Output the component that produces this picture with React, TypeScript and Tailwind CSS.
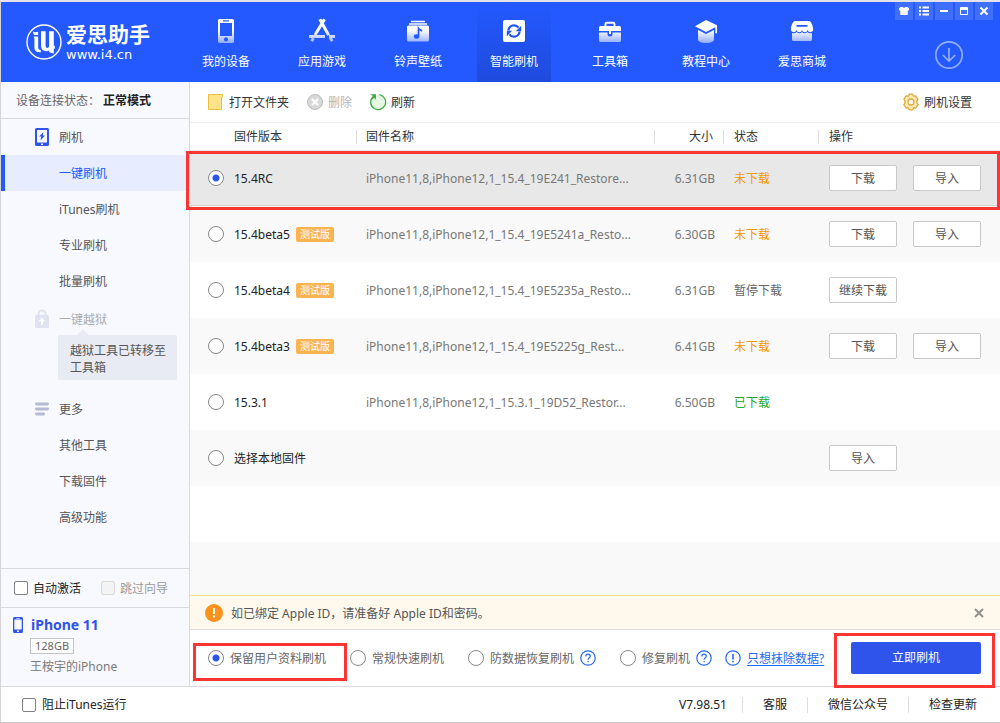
import React, { useState } from "react";

type Firmware = {
  id: string;
  version: string;
  beta?: boolean;
  file?: string;
  size?: string;
  status?: string;
  statusClass?: string;
  actions: string[];
};

const firmwares: Firmware[] = [
  { id: "rc", version: "15.4RC", file: "iPhone11,8,iPhone12,1_15.4_19E241_Restore...", size: "6.31GB", status: "未下载", statusClass: "text-[#f39800]", actions: ["下载", "导入"] },
  { id: "b5", version: "15.4beta5", beta: true, file: "iPhone11,8,iPhone12,1_15.4_19E5241a_Resto...", size: "6.30GB", status: "未下载", statusClass: "text-[#f39800]", actions: ["下载", "导入"] },
  { id: "b4", version: "15.4beta4", beta: true, file: "iPhone11,8,iPhone12,1_15.4_19E5235a_Resto...", size: "6.31GB", status: "暂停下载", statusClass: "text-[#666]", actions: ["继续下载"] },
  { id: "b3", version: "15.4beta3", beta: true, file: "iPhone11,8,iPhone12,1_15.4_19E5225g_Rest...", size: "6.41GB", status: "未下载", statusClass: "text-[#f39800]", actions: ["下载", "导入"] },
  { id: "1531", version: "15.3.1", file: "iPhone11,8,iPhone12,1_15.3.1_19D52_Restor...", size: "6.50GB", status: "已下载", statusClass: "text-[#1fa81f]", actions: [] },
  { id: "local", version: "选择本地固件", actions: ["导入"] },
];

const radioClass =
  "size-4 shrink-0 appearance-none rounded-full border border-[#888] bg-white checked:bg-[radial-gradient(circle,#2f54eb_3px,#ffffff_4px)]";
const checkClass =
  "size-3.5 shrink-0 appearance-none rounded-xs border border-[#808080] bg-white checked:bg-[#2f54eb] disabled:border-[#d9d9d9] disabled:bg-[#f3f3f5]";

function Logo() {
  return (
    <svg width="36" height="36" viewBox="0 0 36 36" fill="none" aria-hidden="true">
      <circle cx="18" cy="18" r="17" stroke="#fff" strokeWidth="1.4" />
      <path d="M7 7.6c1.5.8 3 .7 5.1.2v3.3H8.2C7.6 10.200 7 9 7 7.600Z" fill="#fff" />
      <path d="M7.400 12.400h4.800v10.800c0 1.800.8 2.600 2.600 3v2.200c-4.300 0-6.400-1.600-6.400-5.200V14.600c0-.9-.3-1.600-1-2.200Z" fill="#fff" />
      <path d="M15 7.200h4.600v14.400c0 1.500.6 2.300 1.800 2.300 1.100 0 1.700-.7 1.700-2.100V7.200h4.700v14.600h1v3h-1v4.800l-4.700-1.400v-1.700c-.9.500-1.900.7-3 .7-3.300 0-5.100-1.900-5.100-5.200V7.200Z" fill="#fff" />
    </svg>
  );
}

function NavIcon({ name }: { name: string }) {
  const fill = `url(#g-${name})`;
  return (
    <svg width="26" height="26" viewBox="0 0 26 26" fill="none" aria-hidden="true">
      <defs>
        <linearGradient id={`g-${name}`} x1="0" y1="4" x2="0" y2="25" gradientUnits="userSpaceOnUse">
          <stop offset="0.4" stopColor="#fff" />
          <stop offset="1" stopColor="#fff" stopOpacity="0.5" />
        </linearGradient>
      </defs>
      {name === "device" && (
        <path fillRule="evenodd" fill={fill} d="M6.500 1h13A1.500 1.500 0 0 1 21 2.500v21a1.500 1.500 0 0 1-1.500 1.500h-13A1.500 1.500 0 0 1 5 23.500v-21A1.500 1.500 0 0 1 6.500 1ZM7 5v13h12V5ZM10 2.300v1.200h6V2.300ZM13 19.300a2.100 2.100 0 1 0 0 4.200 2.100 2.100 0 0 0 0-4.200Z" />
      )}
      {name === "apps" && (
        <g stroke={fill} strokeWidth="3" strokeLinecap="butt">
          <path d="M10.800 1.200 19.700 17.300M15.500 1.200 6 17" />
          <path d="M0 18.500h16M20 18.500h6" />
          <path d="m4.300 20.300-1.600 2.900M21.200 19.800l2 3.500" />
        </g>
      )}
      {name === "media" && (
        <>
          <path d="M6 3.500h14M4 6h18" stroke="#fff" strokeWidth="1.300" />
          <rect x="2" y="7.500" width="22" height="16" rx="1.500" fill={fill} />
          <path d="M13.500 18.500V10.500c.8 1.300 2.500 1 3.300 2.800" stroke="#2359ff" strokeWidth="1.700" />
          <ellipse cx="11.600" cy="18.500" rx="2.700" ry="2.200" fill="#2359ff" />
        </>
      )}
      {name === "flash" && (
        <>
          <rect x="2" y="2" width="22" height="22" rx="2" fill="#fff" />
          <path d="M7.500 12.500A5.500 5.500 0 0 1 17.500 9.700M18.500 13.500A5.500 5.500 0 0 1 8.500 16.300" stroke="#2255f0" strokeWidth="2.200" />
          <path d="M20.200 7.800v5.400h-5.400ZM5.800 18.200v-5.400h5.400Z" fill="#2255f0" />
        </>
      )}
      {name === "tools" && (
        <>
          <path d="M8.500 8V6a1.300 1.300 0 0 1 1.300-1.300h6.400A1.300 1.300 0 0 1 17.500 6v2" stroke="#fff" strokeWidth="2" />
          <path d="M3.500 8h19A1.500 1.500 0 0 1 24 9.500V13H2V9.500A1.500 1.500 0 0 1 3.500 8Z" fill="#fff" />
          <path d="M2 14.500h8.500V16a2.500 2.500 0 0 0 5 0v-1.500H24v8a1.500 1.500 0 0 1-1.500 1.500h-19A1.500 1.500 0 0 1 2 22.500Z" fill={fill} />
          <path d="M12 13h2v3h-2Z" fill="#fff" />
        </>
      )}
      {name === "course" && (
        <>
          <path d="M13 2 24 7.200v8h-1.700V9.300L13 14 2 8.200Z" fill="#fff" />
          <path d="m5 12 8 4 8-4v9.500c0 2-3.500 3.500-8 3.500s-8-1.500-8-3.500Z" fill={fill} />
        </>
      )}
      {name === "store" && (
        <>
          <path fillRule="evenodd" fill="#fff" d="M6 3h14c2 0 4 5 4 7.500a2.800 2.800 0 0 1-5.500 1.500 2.800 2.800 0 0 1-5.500 0 2.800 2.800 0 0 1-5.500 0A2.800 2.800 0 0 1 2 10.500C2 8 4 3 6 3Zm1.500 4v1.700h11V7Z" />
          <path d="M3 15c1.800.7 3.500.2 4.700-1 1.500 1.600 3.800 1.600 5.300 0 1.500 1.600 3.800 1.600 5.300 0 1.200 1.200 2.900 1.700 4.700 1v6.500a1.500 1.500 0 0 1-1.500 1.500h-17A1.500 1.500 0 0 1 3 21.500Z" fill={fill} />
        </>
      )}
    </svg>
  );
}

const tabs = [
  ["device", "我的设备"],
  ["apps", "应用游戏"],
  ["media", "铃声壁纸"],
  ["flash", "智能刷机"],
  ["tools", "工具箱"],
  ["course", "教程中心"],
  ["store", "爱思商城"],
];

const windowButtons: [string, React.ReactNode][] = [
  ["皮肤", <path key="p" d="M2.500 2h2L6 3l1.500-1h2L11 3.200v2.300H9.700V10H2.300V5.500H1V3.200Z" fill="#fff" />],
  ["菜单", <path key="p" d="M1 2.500h2M4.500 2.500H11M1 6h2M4.500 6H11M1 9.500h2M4.500 9.500H11" stroke="#fff" strokeWidth="2" />],
  ["最小化", <path key="p" d="M2 6h8" stroke="#fff" strokeWidth="2" />],
  ["最大化", <path key="p" fillRule="evenodd" d="M3 2h6a1 1 0 0 1 1 1v6a1 1 0 0 1-1 1H3a1 1 0 0 1-1-1V3a1 1 0 0 1 1-1Zm0 3v4h6V5Z" fill="#fff" />],
  ["关闭", <path key="p" d="m2.500 2.500 7 7m0-7-7 7" stroke="#fff" strokeWidth="2" />],
];

function Header() {
  return (
    <header className="flex h-20 shrink-0 bg-[#2359ff] text-white">
      <div className="flex w-[188px] shrink-0 items-center gap-1 pl-[25px]">
        <Logo />
        <div className="flex flex-col">
          <span className="text-[21px] leading-[26px] font-bold">爱思助手</span>
          <span className="font-['DejaVu_Sans',sans-serif] text-[13px] leading-4">www.i4.cn</span>
        </div>
      </div>
      <nav className="flex gap-[22px]">
        {tabs.map(([icon, label]) => (
          <a
            key={icon}
            href={`#${icon}`}
            className={
              icon === "flash"
                ? "flex w-[74px] flex-col items-center gap-[9px] bg-linear-to-b from-[#2359ff] to-[#1f4bdc] pt-4"
                : "flex w-[74px] flex-col items-center gap-[9px] pt-4"
            }
          >
            <NavIcon name={icon} />
            <span className="leading-[18px]">{label}</span>
          </a>
        ))}
      </nav>
      <div className="ml-auto flex flex-col items-end gap-5 pr-[7px]">
        <div className="flex gap-0.5">
          {windowButtons.map(([label, icon]) => (
            <button key={label} aria-label={label} className="grid size-[18px] place-items-center bg-[#3f6fff]">
              <svg width="12" height="12" viewBox="0 0 12 12" fill="none" aria-hidden="true">{icon}</svg>
            </button>
          ))}
        </div>
        <button aria-label="下载中心" className="mr-[29px]">
          <svg width="30" height="30" viewBox="0 0 30 30" fill="none" stroke="#93adff" strokeWidth="1.700" aria-hidden="true">
            <circle cx="15" cy="15" r="13.200" />
            <path d="M15 8v13M8.800 15l6.200 6 6.200-6" />
          </svg>
        </button>
      </div>
    </header>
  );
}

function SideItem({ label, active, icon, muted }: { label: string; active?: boolean; icon?: React.ReactNode; muted?: boolean }) {
  return (
    <a
      href="#menu"
      className={
        active
          ? "flex h-9 items-center border-l-4 border-[#2359ff] bg-[#e7ecfe] pl-[29px] text-[#2359ff]"
          : muted
            ? "flex h-9 items-center pl-[33px] text-[#aaabb0]"
            : "flex h-9 items-center pl-[33px] text-[#555]"
      }
    >
      <span className="flex w-[25px] shrink-0">{icon}</span>
      <span className="pt-0.5">{label}</span>
    </a>
  );
}

function Sidebar() {
  return (
    <aside className="flex w-[189px] shrink-0 flex-col border-r border-[#d9dadf] bg-[#f8f9ff]">
      <div className="flex h-[37px] items-center border-b border-[#d9dadf] pt-0.5 pl-[15px] text-[#666]">
        设备连接状态：<strong className="ml-[3px] text-[#222]">正常模式</strong>
      </div>
      <nav className="flex flex-col pb-8">
        <SideItem
          label="刷机"
          icon={
            <svg width="16" height="20" viewBox="0 0 16 20" aria-hidden="true">
              <path fillRule="evenodd" fill="#2f54eb" d="M2.500 1h11A1.500 1.500 0 0 1 15 2.500v15a1.500 1.500 0 0 1-1.500 1.500h-11A1.500 1.500 0 0 1 1 17.500v-15A1.500 1.500 0 0 1 2.500 1ZM3 3v12.500h10V3Zm4 13.600v1.300h2v-1.300Z" />
              <path fill="#2f54eb" d="M9.500 5 5 9.600h2.300L6.500 13.500 11 8.600H8.700Z" />
            </svg>
          }
        />
        <SideItem label="一键刷机" active />
        <SideItem label="iTunes刷机" />
        <SideItem label="专业刷机" />
        <SideItem label="批量刷机" />
        <div className="mt-0.5">
          <SideItem
            label="一键越狱"
            muted
            icon={
              <svg width="16" height="20" viewBox="0 0 16 20" fill="none" aria-hidden="true">
                <path d="M4.500 7V5a3.500 3.500 0 0 1 7 0v2" stroke="#dfe2f0" strokeWidth="2" />
                <rect x="1" y="6" width="14" height="13" rx="1.500" fill="#dfe2f0" />
                <path d="M8 8.500 11.500 12.500H9V16H7v-3.500H4.500Z" fill="#fff" />
              </svg>
            }
          />
        </div>
        <div className="relative mr-3 -mt-0.5 mb-[11px] ml-[57px] rounded-xs bg-[#e8ebf4] pt-[7px] pr-2 pb-1 pl-3 text-[#555]">
          <span className="absolute -top-1 left-[21px] size-2 rotate-45 bg-[#e8ebf4]" />
          <p className="relative leading-[17px]">越狱工具已转移至工具箱</p>
        </div>
        <SideItem
          label="更多"
          icon={
            <svg width="16" height="14" viewBox="0 0 16 14" stroke="#b5bbd3" strokeWidth="2.800" strokeLinecap="round" aria-hidden="true">
              <path d="M2.400 2h11.200M2.400 7h11.200M2.400 12h7.200" />
            </svg>
          }
        />
        <SideItem label="其他工具" />
        <SideItem label="下载固件" />
        <SideItem label="高级功能" />
      </nav>
      <div className="mt-auto flex h-10 items-center gap-5 border-y border-[#d9dadf] pl-[13px]">
        <label className="flex items-center gap-[5px] text-[#222]">
          <input type="checkbox" className={checkClass} />
          <span className="pt-0.5">自动激活</span>
        </label>
        <label className="flex items-center gap-[5px] text-[#999]">
          <input type="checkbox" disabled className={checkClass} />
          <span className="pt-0.5">跳过向导</span>
        </label>
      </div>
      <div className="flex h-[78px] flex-col items-start pt-2 pl-3">
        <div className="flex items-center gap-2 text-sm leading-[18px] font-bold text-[#2f54eb]">
          <svg width="10" height="16" viewBox="0 0 10 16" aria-hidden="true">
            <path fillRule="evenodd" fill="#2f54eb" d="M1.500 0h7A1.500 1.500 0 0 1 10 1.500v13A1.500 1.500 0 0 1 8.500 16h-7A1.500 1.500 0 0 1 0 14.500v-13A1.500 1.500 0 0 1 1.500 0ZM1.300 2.600v9.800h7.400V2.600ZM5 13.200a1 1 0 1 0 0 2 1 1 0 0 0 0-2ZM3.500 1v.7h3V1Z" />
          </svg>
          iPhone 11
        </div>
        <span className="mt-1 ml-[17px] border border-[#c2c4ca] bg-white px-1 text-[11px] leading-[14px] text-[#666]">128GB</span>
        <span className="mt-1 ml-[17px] leading-[18px] text-[#7a7a7a]">王桉宇的iPhone</span>
      </div>
    </aside>
  );
}

function Toolbar() {
  return (
    <div className="flex h-[41px] shrink-0 items-center gap-[17px] border-b border-[#eee] pr-7 pl-[17px] text-[#333]">
      <button className="flex items-center gap-[5px]">
        <svg width="17" height="18" viewBox="0 0 17 18" aria-hidden="true">
          <path d="M1.500 1.500h14v2.300l-1 1.200v11.500h-13Z" fill="#ffe28a" stroke="#e8bf3c" />
        </svg>
        <span className="pt-0.5">打开文件夹</span>
      </button>
      <button disabled className="flex items-center gap-1 text-[#b5b5b5]">
        <svg width="18" height="18" viewBox="0 0 18 18" aria-hidden="true">
          <circle cx="9" cy="9" r="7.500" fill="#d8d8d8" stroke="#bdbdbd" />
          <path d="m6 6 6 6m0-6-6 6" stroke="#fff" strokeWidth="2" />
        </svg>
        <span className="pt-0.5">删除</span>
      </button>
      <button className="flex items-center gap-1">
        <svg width="18" height="18" viewBox="0 0 18 18" fill="none" aria-hidden="true">
          <path d="M10.500 1.700A7.500 7.500 0 1 1 4 3.600" fill="#e6f8e4" stroke="#3fab46" strokeWidth="1.300" />
          <path d="M1 1.200h6v5.500L5.200 4.800 3.500 6.500 2.500 5 4 3Z" fill="#3fab46" />
        </svg>
        <span className="pt-0.5">刷新</span>
      </button>
      <button className="ml-auto flex items-center gap-1">
        <svg width="18" height="18" viewBox="0 0 18 18" fill="#fdebb8" stroke="#dcaa3a" strokeWidth="1.300" strokeLinejoin="round" aria-hidden="true">
          <path d="m7.300 1.200h3.400l.8 2 2.100-.2 2.300 3.200-1 1.600.1 2.300 1.200 1.600-2.300 3.300-2.300-.3-.9 2.100H7.300l-.9-2.100-2.300.3-2.300-3.300 1.200-1.600-.1-2.300-1-1.600L4.200 3l2.300.2Z" />
          <circle cx="9" cy="9" r="3" fill="#fff" />
        </svg>
        <span className="pt-0.5">刷机设置</span>
      </button>
    </div>
  );
}

function FirmwareTable() {
  const [selected, setSelected] = useState("rc");
  return (
    <div className="flex flex-1 flex-col">
      <table className="w-full table-fixed border-collapse">
        <colgroup>
          <col className="w-[167px]" />
          <col />
          <col className="w-[69px]" />
          <col className="w-[95px]" />
          <col className="w-[181px]" />
        </colgroup>
        <thead>
          <tr className="h-[27px] text-left text-[#333]">
            <th className="p-0 font-normal"><div className="h-3.5 border-r border-[#ddd] pl-11 leading-3.5">固件版本</div></th>
            <th className="p-0 font-normal"><div className="h-3.5 border-r border-[#ddd] pl-[9px] leading-3.5">固件名称</div></th>
            <th className="p-0 text-right font-normal"><div className="h-3.5 border-r border-[#ddd] pr-2.5 leading-3.5">大小</div></th>
            <th className="p-0 font-normal"><div className="h-3.5 border-r border-[#ddd] pl-2.5 leading-3.5">状态</div></th>
            <th className="p-0 font-normal"><div className="h-3.5 pl-2.5 leading-3.5">操作</div></th>
          </tr>
        </thead>
        <tbody>
          {firmwares.map((fw, i) => (
            <tr
              key={fw.id}
              className={
                fw.id === selected
                  ? "relative h-14 bg-[#e8e8e8] shadow-[inset_0_-1px_0_#d4d4d4]"
                  : i % 2
                    ? "relative h-14 bg-[#f9f9f9]"
                    : "relative h-14 bg-white"
              }
            >
              <td className="p-0">
                {i === 0 && <span className="pointer-events-none absolute top-px right-0 -bottom-1 -left-1 z-10 border-3 border-[#fb3434]" />}
                <label className="flex items-center pl-[18px] text-[#222]">
                  <input type="radio" name="firmware" className={radioClass} checked={fw.id === selected} onChange={() => setSelected(fw.id)} />
                  <span className="ml-2.5 pt-0.5">{fw.version}</span>
                  {fw.beta && <span className="ml-1.5 rounded-xs bg-[#fbb450] px-1 text-[10px] leading-[15px] text-white">测试版</span>}
                </label>
              </td>
              <td className="truncate p-0 pt-0.5 pl-[9px] text-[#777]">{fw.file}</td>
              <td className="p-0 pt-0.5 pr-[9px] text-right text-[#777]">{fw.size}</td>
              <td className="p-0 pt-0.5 pl-2.5"><span className={fw.statusClass}>{fw.status}</span></td>
              <td className="p-0 pl-2.5">
                <div className="flex gap-4">
                  {fw.actions.map((a) => (
                    <button key={a} className="h-[26px] w-[68px] rounded-xs border border-[#c8c8c8] bg-white pt-0.5 text-[#555]">{a}</button>
                  ))}
                </div>
              </td>
            </tr>
          ))}
        </tbody>
      </table>
      <div className="h-14 bg-white" />
      <div className="flex-1 bg-[#f9f9f9]" />
    </div>
  );
}

function HintIcon({ kind }: { kind: "question" | "alert" }) {
  return (
    <svg width="16" height="16" viewBox="0 0 16 16" fill="none" stroke="#2468f2" strokeWidth="1.200" className="shrink-0" aria-hidden="true">
      <circle cx="8" cy="8" r="7.200" />
      {kind === "question" ? (
        <>
          <path d="M5.800 6.400C5.800 4.900 6.700 4.100 8 4.100s2.300.8 2.300 2.100c0 1.600-2.200 1.700-2.200 3.500" />
          <path d="M8.100 10.900v1.300" />
        </>
      ) : (
        <path d="M8 4v5.500M8 10.700v1.500" strokeWidth="1.600" />
      )}
    </svg>
  );
}

const modes: [string, boolean][] = [
  ["保留用户资料刷机", false],
  ["常规快速刷机", false],
  ["防数据恢复刷机", true],
  ["修复刷机", true],
];

function Options() {
  const [mode, setMode] = useState(0);
  return (
    <div className="flex h-14 shrink-0 items-center pr-[19px] pl-[18px] whitespace-nowrap">
      <div className="flex items-center gap-6">
        {modes.map(([label, hint], i) => (
          <label key={label} className="relative flex h-4 items-center gap-1.5 text-[#666]">
            <input type="radio" name="mode" className={radioClass} checked={mode === i} onChange={() => setMode(i)} />
            <span className="pt-0.5">{label}</span>
            {hint && <HintIcon kind="question" />}
            {i === 0 && <span className="pointer-events-none absolute -top-[7px] -right-[21px] -bottom-[15px] -left-[15px] border-3 border-[#fb3434]" />}
          </label>
        ))}
      </div>
      <a href="#erase" className="ml-[13px] flex items-center gap-1.5 text-[#2468f2]">
        <HintIcon kind="alert" />
        <span className="pt-0.5 underline underline-offset-2">只想抹除数据?</span>
      </a>
      <div className="relative ml-auto">
        <button className="block h-8 w-[130px] rounded-xs bg-[#2f54eb] text-white">立即刷机</button>
        <span className="pointer-events-none absolute -top-[9px] -right-[14px] -bottom-[14px] -left-[17px] z-10 border-3 border-[#fb3434]" />
      </div>
    </div>
  );
}

export default function App() {
  return (
    <div className="flex min-h-screen flex-col border-t-2 border-b border-l border-t-[#e2e4ea] border-b-[#c8c8c8] border-l-[#d5d5d8] bg-white font-['Noto_Sans','Noto_Sans_CJK_SC',sans-serif] text-xs">
      <Header />
      <div className="flex flex-1">
        <Sidebar />
        <main className="flex min-w-0 flex-1 flex-col">
          <Toolbar />
          <FirmwareTable />
          <div className="flex h-[35px] shrink-0 items-center gap-2 border-y border-t-[#fbe08f] border-b-[#ddd] bg-[#fef9ec] pr-[15px] pl-[15px] text-[#555]">
            <svg width="18" height="18" viewBox="0 0 18 18" aria-hidden="true">
              <circle cx="9" cy="9" r="9" fill="#fa921b" />
              <path d="M9 4v6M9 11.500v2" stroke="#fff" strokeWidth="2" />
            </svg>
            <span className="pt-0.5">如已绑定 Apple ID，请准备好 Apple ID和密码。</span>
            <button aria-label="关闭提示" className="ml-auto">
              <svg width="12" height="12" viewBox="0 0 12 12" stroke="#909090" strokeWidth="2" aria-hidden="true">
                <path d="m2 2 8 8m0-8-8 8" />
              </svg>
            </button>
          </div>
          <Options />
        </main>
      </div>
      <footer className="flex h-9 shrink-0 items-center border-t border-[#d9dadf] pr-[3px] pl-[21px] text-[#222]">
        <label className="flex items-center gap-1.5">
          <input type="checkbox" className={checkClass} />
          阻止iTunes运行
        </label>
        <div className="ml-auto flex items-center leading-4">
          <span className="pr-[15px]">V7.98.51</span>
          <a href="#service" className="border-l border-[#ddd] px-5">客服</a>
          <a href="#wechat" className="border-l border-[#ddd] px-5">微信公众号</a>
          <a href="#update" className="border-l border-[#ddd] px-5">检查更新</a>
        </div>
      </footer>
    </div>
  );
}
